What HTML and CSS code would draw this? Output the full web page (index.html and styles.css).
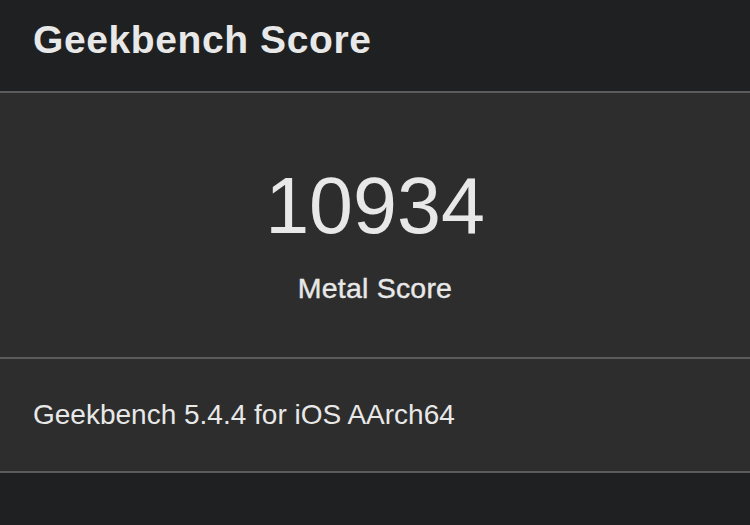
FILE: index.html
```html
<!DOCTYPE html>
<html>
<head>
<meta charset="utf-8">
<link rel="stylesheet" href="styles.css">
</head>
<body>
<div class="page">
  <header class="header"><h1 class="title">Geekbench Score</h1></header>
  <section class="score-card">
    <div class="score">10934</div>
    <div class="score-label">Metal Score</div>
  </section>
  <section class="info-row">
    <div class="info">Geekbench 5.4.4 for iOS AArch64</div>
  </section>
</div>
</body>
</html>
```
FILE: styles.css
```css
html, body {
  margin: 0;
  padding: 0;
  background: #1f2022;
}
.page {
  width: 750px;
  height: 525px;
  overflow: hidden;
  font-family: "Liberation Sans", Arial, sans-serif;
  color: #e8e8e8;
  background: #1f2022;
}
.header {
  height: 91px;
  box-sizing: border-box;
  padding-left: 33px;
  display: flex;
  align-items: flex-start;
}
.title {
  margin: 0;
  margin-top: 16px;
  font-size: 39px;
  font-weight: bold;
  line-height: 48px;
  letter-spacing: 0.6px;
}
.score-card {
  border-top: 2px solid #5b5b5b;
  border-bottom: 2px solid #5b5b5b;
  background: #2d2d2d;
  height: 264px;
  box-sizing: content-box;
  display: flex;
  flex-direction: column;
  align-items: center;
}
.score {
  margin-top: 68px;
  font-size: 79px;
  line-height: 90px;
  font-weight: normal;
}
.score-label {
  margin-top: 20px;
  font-size: 28.5px;
  line-height: 34px;
  letter-spacing: 0.2px;
  -webkit-text-stroke: 0.4px #e8e8e8;
}
.info-row {
  background: #2d2d2d;
  border-bottom: 2px solid #5b5b5b;
  height: 112px;
  display: flex;
  align-items: center;
  padding-left: 33px;
}
.info {
  font-size: 28px;
  line-height: 34px;
}
```
